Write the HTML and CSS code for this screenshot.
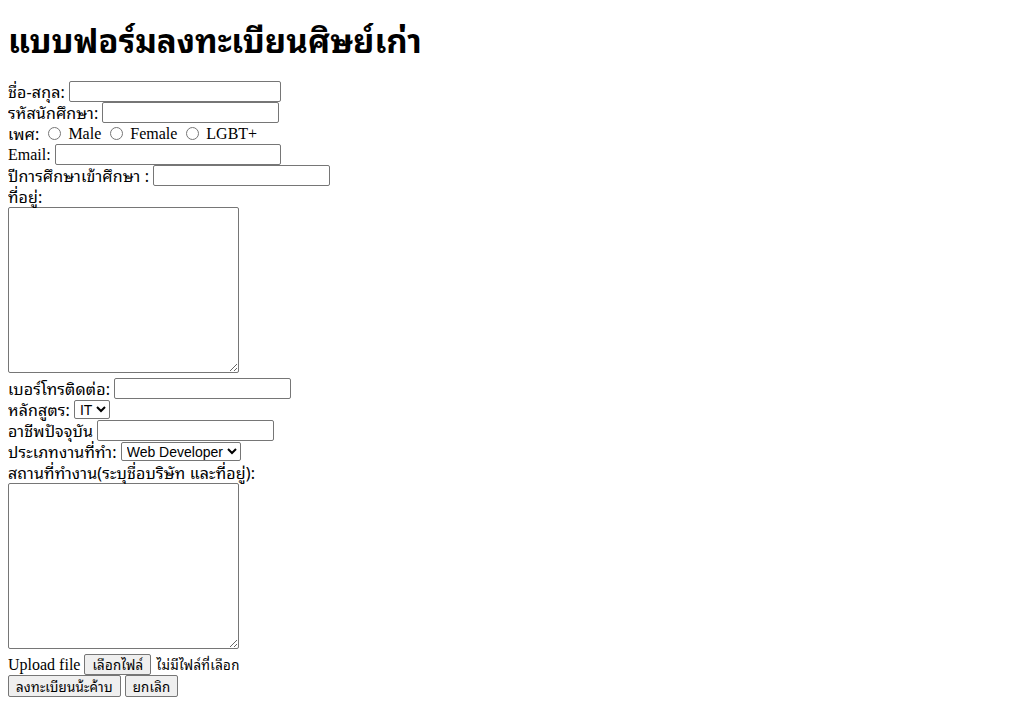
FILE: index.html
```html
<!DOCTYPE html>
<html lang="th">
<head>
<meta charset="utf-8">
<title>แบบฟอร์มลงทะเบียนศิษย์เก่า</title>
<link rel="stylesheet" href="styles.css">
</head>
<body>
<h1 class="title">แบบฟอร์มลงทะเบียนศิษย์เก่า</h1>
<form class="form">
  <div class="row"><label>ชื่อ-สกุล:</label> <input class="field field-name" type="text"></div>
  <div class="row"><label>รหัสนักศึกษา:</label> <input class="field" type="text"></div>
  <div class="row"><span>เพศ:</span> <input class="radio" type="radio" name="sex"> <span class="en">Male</span> <input class="radio" type="radio" name="sex"> <span class="en">Female</span> <input class="radio" type="radio" name="sex"> <span class="en">LGBT+</span></div>
  <div class="row"><label class="en">Email:</label> <input class="field field-email" type="email"></div>
  <div class="row"><label>ปีการศึกษาเข้าศึกษา :</label> <input class="field" type="text"></div>
  <div class="row"><label>ที่อยู่:</label></div>
  <textarea class="area"></textarea>
  <div class="row"><label>เบอร์โทรติดต่อ:</label> <input class="field" type="text"></div>
  <div class="row"><label>หลักสูตร:</label> <select class="select"><option>IT</option></select></div>
  <div class="row"><label>อาชีพปัจจุบัน</label> <input class="field" type="text"></div>
  <div class="row"><label>ประเภทงานที่ทำ:</label> <select class="select"><option>Web Developer</option></select></div>
  <div class="row"><label>สถานที่ทำงาน(ระบุชื่อบริษัท และที่อยู่):</label></div>
  <textarea class="area"></textarea>
  <div class="row"><span class="en">Upload file</span> <button type="button" class="btn">เลือกไฟล์</button><span class="nofile">ไม่มีไฟล์ที่เลือก</span></div>
  <div class="row row-actions"><button type="submit" class="btn">ลงทะเบียนน้ะค้าบ</button> <button type="reset" class="btn">ยกเลิก</button></div>
</form>
</body>
</html>
```

FILE: styles.css
```css
html, body {
  background: #ffffff;
  color: #000000;
}
body {
  margin: 8px;
  font-family: "Liberation Serif", serif;
  font-size: 16px;
}
.title {
  font-family: Tahoma, "Noto Sans Thai Looped", Loma, Garuda, "Noto Sans Thai", "Liberation Sans", sans-serif;
  font-size: 33px;
  line-height: 46px;
  font-weight: bold;
  margin: 8px 0 19px;
}
.form {
  display: block;
}
.row {
  display: block;
  height: 21px;
  line-height: 21px;
  white-space: nowrap;
}
.row > * {
  vertical-align: top;
}
label, .row > span {
  font-family: Tahoma, "Noto Sans Thai Looped", Loma, Garuda, "Noto Sans Thai", "Liberation Sans", sans-serif;
  font-size: 16px;
  letter-spacing: 0.15px;
  line-height: 21px;
}
.row > .en, label.en {
  font-family: "Liberation Serif", serif;
  font-size: 16px;
  letter-spacing: 0;
}
.field {
  box-sizing: border-box;
  width: 177px;
  height: 21px;
  padding: 1px 2px;
  border: 1px solid #767676;
  border-radius: 2px;
  font: 13.33px "Liberation Sans", sans-serif;
  margin: 0;
}
.field-name { width: 212px; }
.field-email { width: 226px; }
.radio {
  width: 13px;
  height: 13px;
  margin: 4px 3px 0 5px;
}
.area {
  box-sizing: border-box;
  width: 231px;
  height: 166px;
  margin: 0 0 5px;
  border: 1px solid #767676;
  border-radius: 2px;
  display: block;
  resize: both;
}
.select {
  box-sizing: border-box;
  font: 14px "Liberation Sans", sans-serif;
  height: 19px;
  padding: 0 0 0 1px;
  border: 1px solid #767676;
  border-radius: 2px;
  background: #fff;
  margin: 1px 0 0;
}
.btn {
  box-sizing: border-box;
  font: 13.33px Tahoma, "Noto Sans Thai Looped", Loma, Garuda, "Noto Sans Thai", "Liberation Sans", sans-serif;
  letter-spacing: 0.2px;
  padding: 0 7px;
  height: 21px;
  line-height: 19px;
  margin: 0;
  border: 1px solid #767676;
  border-radius: 2px;
  background: #efefef;
  color: #000;
}
.row > .nofile {
  font: 13.33px Tahoma, "Noto Sans Thai Looped", Loma, Garuda, "Noto Sans Thai", "Liberation Sans", sans-serif;
  letter-spacing: 0.3px;
  line-height: 21px;
  margin-left: 5px;
}
.row-actions {
  height: 22px;
}
.row-actions .btn {
  height: 22px;
  line-height: 20px;
}
```
